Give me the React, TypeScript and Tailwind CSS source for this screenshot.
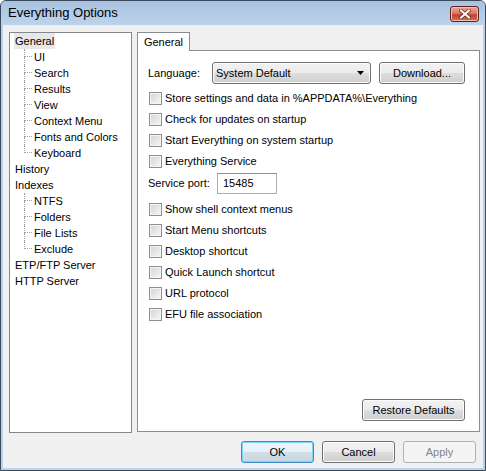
import React from "react";

const font = { fontFamily: '"Liberation Sans", Arial, sans-serif' };

function Check({ label }: { label: string }) {
  return (
    <div className="flex items-center h-[21px]">
      <span className="w-[13px] h-[13px] box-border border border-[#8e8f8f] bg-[linear-gradient(135deg,#d3d3d3,#f8f8f8)] shadow-[inset_0_0_0_1px_#f4f4f4] ml-[1px]" />
      <span className="ml-[3px] text-[11px] leading-none text-black">{label}</span>
    </div>
  );
}

function Btn({
  children,
  w,
  variant = "normal",
}: {
  children: React.ReactNode;
  w: string;
  variant?: "normal" | "default" | "disabled";
}) {
  const base =
    "h-[22px] rounded-[3px] box-border border flex items-center justify-center text-[11px] leading-none";
  if (variant === "disabled")
    return (
      <div className={`${base} ${w} border-[#adb2b5] bg-[#f4f4f4] text-[#838383]`}>{children}</div>
    );
  if (variant === "default")
    return (
      <div
        className={`${base} ${w} border-[#3c8cc8] bg-[linear-gradient(#eef6fb_0%,#e5eff6_50%,#d3dfe8_50%,#c8d6e0_100%)] shadow-[inset_0_0_0_1px_#7fd3f6] text-black`}
      >
        {children}
      </div>
    );
  return (
    <div
      className={`${base} ${w} border-[#707070] bg-[linear-gradient(#f2f2f2_0%,#ebebeb_50%,#dddddd_50%,#cfcfcf_100%)] shadow-[inset_0_0_0_1px_#fcfcfc] text-black`}
    >
      {children}
    </div>
  );
}

function TreeChild({ label, last }: { label: string; last?: boolean }) {
  return (
    <div className="flex h-[16px] items-stretch">
      <div className="ml-[14px] w-[8px] flex flex-col">
        <div className="h-[8px] border-l border-b border-dotted border-[#a0a0a0]" />
        <div className={`h-[8px] ${last ? "" : "border-l border-dotted border-[#a0a0a0]"}`} />
      </div>
      <span className="ml-[2px] text-[11px] leading-[16px] text-black">{label}</span>
    </div>
  );
}

function TreeTop({ label, selected }: { label: string; selected?: boolean }) {
  return (
    <div className="flex h-[16px] items-center">
      <span
        className={`ml-[4px] px-[1px] text-[11px] leading-[16px] text-black ${selected ? "bg-[#e8e8e8]" : ""}`}
      >
        {label}
      </span>
    </div>
  );
}

export default function App() {
  return (
    <div
      className="w-[486px] h-[471px] box-border border border-[#3a4a5c] rounded-t-[6px] bg-[#b9d1ea] flex flex-col overflow-hidden"
      style={font}
    >
      {/* Title bar */}
      <div className="h-[24px] shrink-0 flex items-center justify-between bg-[linear-gradient(#a8c2de,#bcd3ec)]">
        <span className="ml-[7px] text-[13px] text-black">Everything Options</span>
        <div className="mr-[6px] mt-[1px] w-[29px] h-[16px] box-border border border-[#5a2020] rounded-[3px] bg-[linear-gradient(#e8a498_0%,#db7a6a_45%,#c8402f_55%,#d56a52_100%)] shadow-[inset_0_0_0_1px_#f0c0b4] flex items-center justify-center">
          <svg width="12" height="10" viewBox="0 0 12 10">
            <path d="M2 1.5 L10 8.5 M10 1.5 L2 8.5" stroke="#6a2a24" strokeWidth="3.6" strokeLinecap="square" />
            <path d="M2 1.5 L10 8.5 M10 1.5 L2 8.5" stroke="#ffffff" strokeWidth="2" strokeLinecap="square" />
          </svg>
        </div>
      </div>

      {/* Client */}
      <div className="mx-[2px] mb-[2px] flex-1 bg-[#f0f0f0] flex flex-col">
        <div className="flex pl-[6px] pt-[6px]">
          {/* Tree */}
          <div className="mt-[1px] w-[123px] h-[401px] box-border border border-[#828790] bg-white flex flex-col">
            <TreeTop label="General" selected />
            <TreeChild label="UI" />
            <TreeChild label="Search" />
            <TreeChild label="Results" />
            <TreeChild label="View" />
            <TreeChild label="Context Menu" />
            <TreeChild label="Fonts and Colors" />
            <TreeChild label="Keyboard" last />
            <TreeTop label="History" />
            <TreeTop label="Indexes" />
            <TreeChild label="NTFS" />
            <TreeChild label="Folders" />
            <TreeChild label="File Lists" />
            <TreeChild label="Exclude" last />
            <TreeTop label="ETP/FTP Server" />
            <TreeTop label="HTTP Server" />
          </div>

          {/* Tabs */}
          <div className="ml-[5px] w-[343px] flex flex-col">
            <div className="h-[19px] flex items-end">
              <div className="ml-0 w-[53px] h-[19px] box-border border border-b-0 border-[#898c95] bg-white flex items-center justify-center relative top-[1px]">
                <span className="text-[11px] leading-none text-black">General</span>
              </div>
            </div>
            <div className="h-[382px] box-border border border-[#898c95] bg-white flex flex-col pl-[10px] pr-[14px] pt-[11px] pb-[10px]">
              <div className="flex items-center h-[22px]">
                <span className="text-[11px] leading-none text-black w-[64px]">Language:</span>
                <div className="w-[159px] h-[22px] box-border border border-[#707070] rounded-[3px] bg-[linear-gradient(#f2f2f2_0%,#ebebeb_50%,#dddddd_50%,#cfcfcf_100%)] shadow-[inset_0_0_0_1px_#fcfcfc] flex items-center justify-between pl-[3px] pr-[6px]">
                  <span className="text-[11px] leading-none text-black">System Default</span>
                  <svg width="7" height="4" viewBox="0 0 7 4">
                    <path d="M0 0 L7 0 L3.5 4 Z" fill="#000" />
                  </svg>
                </div>
                <div className="ml-auto">
                  <Btn w="w-[86px]">Download...</Btn>
                </div>
              </div>
              <div className="mt-[4px] flex flex-col">
                <Check label="Store settings and data in %APPDATA%\Everything" />
                <Check label="Check for updates on startup" />
                <Check label="Start Everything on system startup" />
                <Check label="Everything Service" />
                <div className="flex items-center h-[23px]">
                  <span className="text-[11px] leading-none text-black w-[69px]">Service port:</span>
                  <div className="w-[60px] h-[21px] box-border border border-[#abadb3] border-t-[#8e9199] bg-white flex items-center pl-[5px]">
                    <span className="text-[11px] leading-none text-black">15485</span>
                  </div>
                </div>
                <div className="mt-[4px] flex flex-col">
                  <Check label="Show shell context menus" />
                  <Check label="Start Menu shortcuts" />
                  <Check label="Desktop shortcut" />
                  <Check label="Quick Launch shortcut" />
                  <Check label="URL protocol" />
                  <Check label="EFU file association" />
                </div>
              </div>
              <div className="mt-auto self-end">
                <Btn w="w-[103px]">Restore Defaults</Btn>
              </div>
            </div>
          </div>
        </div>

        {/* Bottom buttons */}
        <div className="mt-[8px] flex justify-end gap-[8px] pr-[7px]">
          <Btn w="w-[73px]" variant="default">OK</Btn>
          <Btn w="w-[73px]">Cancel</Btn>
          <Btn w="w-[73px]" variant="disabled">Apply</Btn>
        </div>
      </div>
    </div>
  );
}
